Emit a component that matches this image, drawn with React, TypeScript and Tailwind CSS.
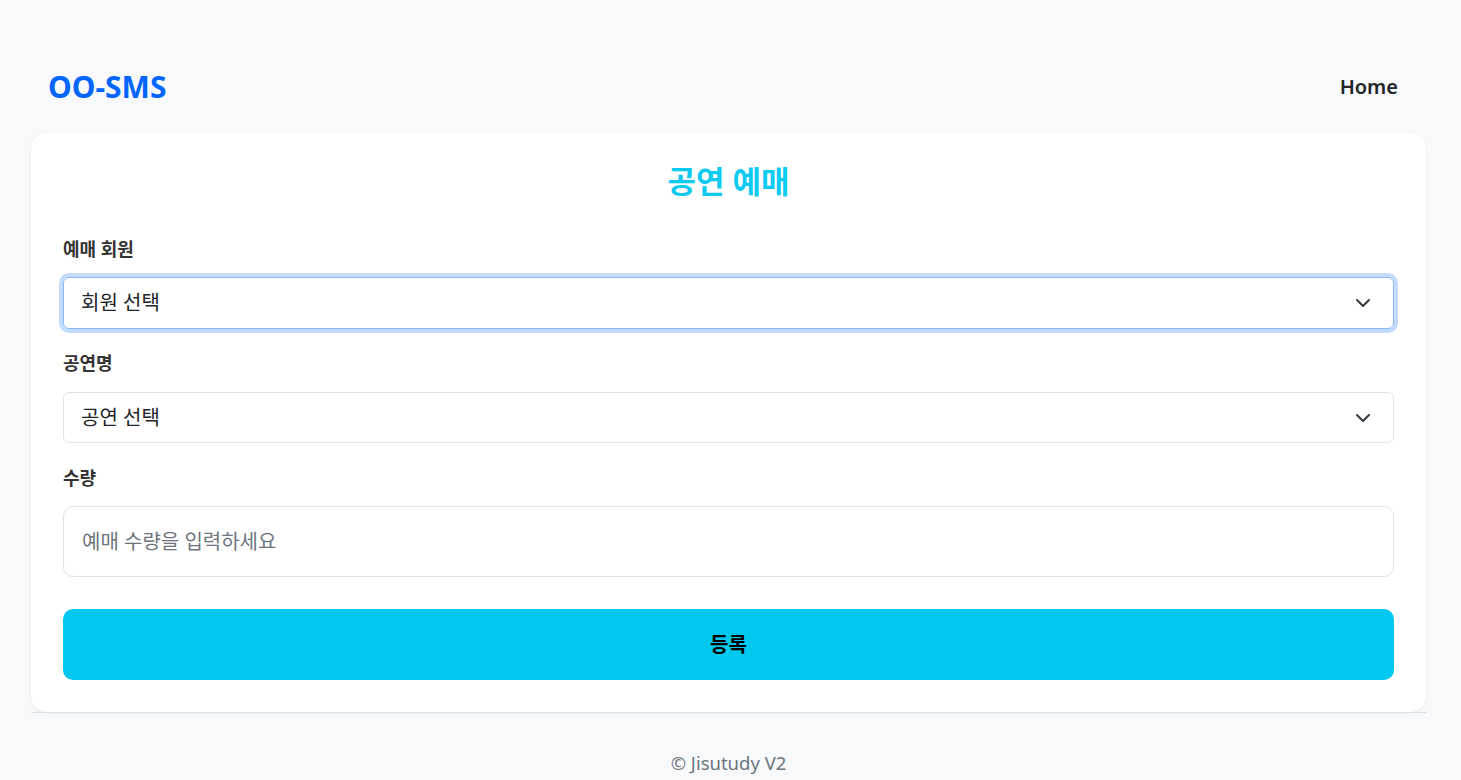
import React from "react";

const font = { fontFamily: '"Noto Sans", "Noto Sans CJK KR", sans-serif' };

function Chevron() {
  return (
    <svg width="16" height="16" viewBox="0 0 16 16" className="absolute right-[22px] top-1/2 -translate-y-1/2">
      <path d="m2 5 6 6 6-6" fill="none" stroke="#343a40" strokeWidth="2" strokeLinecap="round" strokeLinejoin="round" />
    </svg>
  );
}

export default function App() {
  return (
    <div style={font} className="min-h-[780px] bg-[#f8f9fa] pl-[31px] pr-[35px]">
      <header className="flex h-[133px] items-center justify-between pl-[17px] pr-[28px] pt-[40px]">
        <span className="text-[30px] font-bold leading-none text-[#0066ff]">OO-SMS</span>
        <span className="text-[20px] font-semibold leading-none text-[#212529]">Home</span>
      </header>
      <div className="rounded-[16px] bg-white px-[32px] pb-[32px] pt-[30px] shadow-[0_1px_3px_rgba(0,0,0,0.08)]">
        <h1 className="text-center text-[31px] font-bold leading-[36px] text-[#0dcaf0]">공연 예매</h1>
        <label className="mt-[38px] block text-[18px] font-bold leading-[24px] text-[#333]">예매 회원</label>
        <div className="relative mt-[16px] h-[52px] rounded-[6px] border border-[#86b7fe] shadow-[0_0_0_4px_rgba(13,110,253,0.25)]">
          <div className="flex h-full items-center pl-[17px] text-[20px] text-[#212529]">회원 선택</div>
          <Chevron />
        </div>
        <label className="mt-[22px] block text-[18px] font-bold leading-[24px] text-[#333]">공연명</label>
        <div className="relative mt-[17px] h-[51px] rounded-[6px] border border-[#dee2e6]">
          <div className="flex h-full items-center pl-[17px] text-[20px] text-[#212529]">공연 선택</div>
          <Chevron />
        </div>
        <label className="mt-[23px] block text-[18px] font-bold leading-[24px] text-[#333]">수량</label>
        <div className="mt-[16px] flex h-[71px] items-center rounded-[10px] border border-[#dee2e6] pl-[18px] text-[20px] text-[#6c757d]">
          예매 수량을 입력하세요
        </div>
        <button className="mt-[32px] flex h-[71px] w-full items-center justify-center rounded-[10px] bg-[#00c8ef] text-[20px] font-bold text-black">
          등록
        </button>
      </div>
      <footer className="border-t border-[#dee2e6] pt-[37px] text-center text-[18.5px] leading-[26px] text-[#6c757d]">
        © Jisutudy V2
      </footer>
    </div>
  );
}
